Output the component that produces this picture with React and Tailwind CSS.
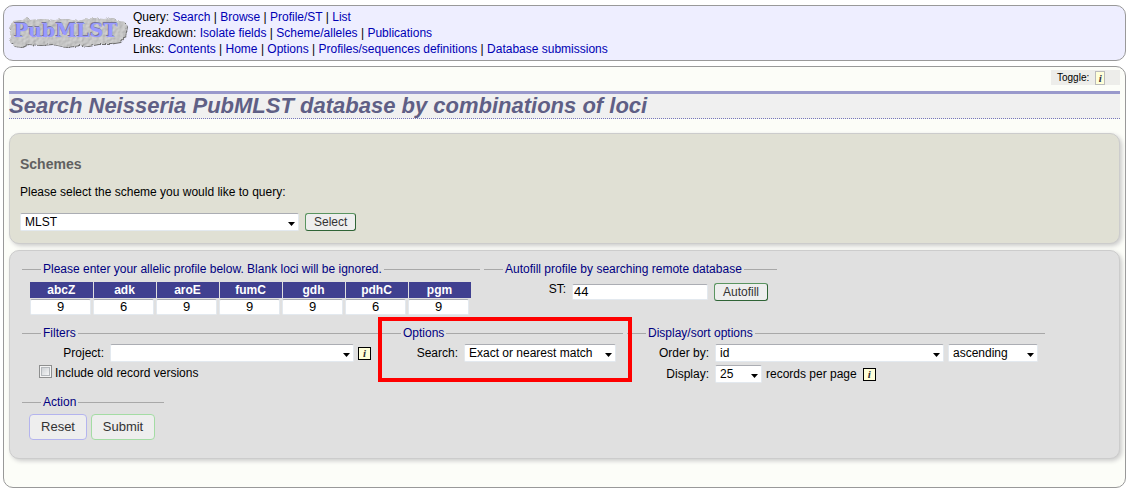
import React, { useState } from 'react';

const navRows = [
  { title: 'Query', links: ['Search', 'Browse', 'Profile/ST', 'List'] },
  { title: 'Breakdown', links: ['Isolate fields', 'Scheme/alleles', 'Publications'] },
  {
    title: 'Links',
    links: ['Contents', 'Home', 'Options', 'Profiles/sequences definitions', 'Database submissions'],
  },
];

const loci = ['abcZ', 'adk', 'aroE', 'fumC', 'gdh', 'pdhC', 'pgm'];

const Logo = () => (
  <svg width="120" height="34" viewBox="0 0 120 34" role="img" aria-label="PubMLST" className="shrink-0">
    <defs>
      <filter id="stone" x="-5%" y="-10%" width="110%" height="125%" colorInterpolationFilters="sRGB">
        <feTurbulence type="fractalNoise" baseFrequency="0.3" numOctaves="2" seed="4" result="noise" />
        <feDisplacementMap in="SourceGraphic" in2="noise" scale="3" xChannelSelector="R" yChannelSelector="G" result="rough" />
        <feDiffuseLighting in="noise" surfaceScale="0.5" lightingColor="#dadada" result="light">
          <feDistantLight azimuth="225" elevation="65" />
        </feDiffuseLighting>
        <feComposite in="light" in2="rough" operator="in" result="rock" />
        <feDropShadow in="rough" dx="1" dy="1" stdDeviation="0.4" floodColor="#707070" result="edge" />
        <feMerge>
          <feMergeNode in="edge" />
          <feMergeNode in="rock" />
        </feMerge>
      </filter>
    </defs>
    <path
      filter="url(#stone)"
      fill="#c4c4c4"
      d="M5 5 L15 4 L19 1 L22 4 L34 3 L46 4 L58 3 L70 5 L82 2 L96 3 L106 2 L109 5 L117 6 L119 10 L117 20 L112 26 L100 28 L90 28 L80 30 L72 29 L58 31 L44 28 L32 29 L20 28 L14 31 L6 30 L2 26 L3 20 L1 12 Z"
    />
    <text x="5" y="20" fontFamily="'DejaVu Serif', serif" fontWeight="bold" fontSize="19" fill="#77779c">
      PubMLST
    </text>
    <text x="6" y="21" fontFamily="'DejaVu Serif', serif" fontWeight="bold" fontSize="19" fill="#9999ff">
      PubMLST
    </text>
  </svg>
);

const Select = ({ options, className, ...props }) => (
  <span className={`relative inline-block h-[18px] ${className}`}>
    <select
      {...props}
      className="block h-full w-full appearance-none rounded-xs border border-[#e3e9ef] border-t-[#abadb3] bg-white pl-1 pr-4 text-[12px] leading-4 text-black"
    >
      {options.map((option) => (
        <option key={option}>{option}</option>
      ))}
    </select>
    <svg width="7" height="4" viewBox="0 0 7 4" className="pointer-events-none absolute right-1 bottom-[5px]">
      <path d="M0 0h7L3.5 4z" fill="#000" />
    </svg>
  </span>
);

const Fieldset = ({ legend, className, children }) => (
  <fieldset className={`relative border-t border-[#a8a8a8] ${className}`}>
    <legend className="ml-[19px] px-0.5 leading-4 text-[#000080]">{legend}</legend>
    {children}
  </fieldset>
);

const InfoButton = ({ className }) => (
  <button
    type="button"
    aria-label="Information"
    className={`border bg-[#ffffd8] text-center font-['Liberation_Serif',serif] text-[11px] font-bold italic ${className}`}
  >
    i
  </button>
);

const SmallButton = ({ children }) => (
  <button
    type="button"
    className="h-[18px] rounded-[3px] border border-[#5a9460] border-r-[#2f6436] border-b-[#2f6436] bg-[#eee] px-2 text-[12px] leading-4 text-[#333]"
  >
    {children}
  </button>
);

export default function App() {
  const [profile, setProfile] = useState({ abcZ: '9', adk: '6', aroE: '9', fumC: '9', gdh: '9', pdhC: '6', pgm: '9' });
  const [st, setSt] = useState('44');

  const handleChange = (e) => {
    const { name, value } = e.target;
    setProfile((prev) => ({ ...prev, [name]: value }));
  };

  return (
    <div className="bg-white px-[3px] pt-[5px] pb-3.5 font-['Liberation_Sans',Arial,sans-serif] text-[12px] leading-4 text-black">
      {/* Menu */}
      <header className="flex rounded-[10px] border border-[#999] bg-[#eeeeff] py-[3px] pl-1">
        <div className="mr-[5px] flex items-center">
          <Logo />
        </div>
        <nav>
          {navRows.map((row) => (
            <div key={row.title}>
              {row.title}:{' '}
              {row.links.map((link, i) => (
                <React.Fragment key={link}>
                  {i > 0 && ' | '}
                  <a href="#" className="text-[#0000b4]">
                    {link}
                  </a>
                </React.Fragment>
              ))}
            </div>
          ))}
        </nav>
      </header>

      <main className="mt-[5px] rounded-[10px] border border-[#999] bg-[#fcfdf8] px-[5px] pt-[3px] pb-7">
        <div className="flex justify-end">
          <div className="flex h-[15px] w-[69px] items-center gap-1.5 bg-[#ededea] pl-1.5 text-[10px]">
            Toggle:
            <InfoButton className="h-[14px] w-[10px] border-[#bbb] leading-3 text-[#334]" />
          </div>
        </div>
        <h1 className="mt-1.5 border-t-[3px] border-b border-t-[#9999cc] border-b-[#7777bb] bg-[#f0f0f0] text-[22px] leading-6 font-bold text-[#5f5f85] italic [border-bottom-style:dotted]">
          Search Neisseria PubMLST database by combinations of loci
        </h1>

        {/* Schemes */}
        <section className="mt-3.5 rounded-[10px] border border-[#ccc] bg-[#e0e0d4] px-2.5 pt-[22px] pb-3 shadow-[2px_2px_4px_#ccc]">
          <h2 className="text-[14px] leading-4 font-bold text-[#606060]">Schemes</h2>
          <p className="mt-3">
            <label htmlFor="scheme">Please select the scheme you would like to query:</label>
          </p>
          <div className="mt-[13px] flex gap-1.5">
            <Select id="scheme" options={['MLST']} className="w-[279px]" />
            <SmallButton>Select</SmallButton>
          </div>
        </section>

        {/* Query form */}
        <form
          onSubmit={(e) => e.preventDefault()}
          className="mt-1.5 rounded-[10px] border border-[#ccc] bg-[#e0e0e0] px-3 pt-2.5 pb-[18px] shadow-[2px_2px_4px_#ccc]"
        >
          <div className="flex gap-1">
            <Fieldset legend="Please enter your allelic profile below. Blank loci will be ignored." className="h-16 w-[458px]">
              <table className="mt-[5px] ml-2 border-collapse">
                <thead>
                  <tr>
                    {loci.map((locus) => (
                      <th
                        key={locus}
                        id={`head-${locus}`}
                        className="h-4 w-[63px] border-r border-[#e0e0e0] bg-[#404090] p-0 font-bold text-white"
                      >
                        {locus}
                      </th>
                    ))}
                  </tr>
                </thead>
                <tbody>
                  <tr>
                    {loci.map((locus) => (
                      <td key={locus} className="p-0 pt-px pr-0.5">
                        <input
                          type="text"
                          name={locus}
                          aria-labelledby={`head-${locus}`}
                          value={profile[locus]}
                          onChange={handleChange}
                          className="block h-4 w-[61px] rounded-xs border border-[#e3e9ef] border-t-[#abadb3] bg-white text-center text-[13px]"
                        />
                      </td>
                    ))}
                  </tr>
                </tbody>
              </table>
            </Fieldset>

            <Fieldset legend="Autofill profile by searching remote database" className="h-16 w-[293px]">
              <div className="mt-1 flex items-start">
                <label htmlFor="st" className="mr-1.5 w-[82px] text-right">
                  ST:
                </label>
                <div className="mt-0.5 flex items-center gap-1.5">
                  <input
                    id="st"
                    type="text"
                    value={st}
                    onChange={(e) => setSt(e.target.value)}
                    className="h-4 w-[136px] rounded-xs border border-[#e3e9ef] border-t-[#abadb3] bg-white px-px text-[13px]"
                  />
                  <SmallButton>Autofill</SmallButton>
                </div>
              </div>
            </Fieldset>
          </div>

          <div className="flex gap-1">
            <Fieldset legend="Filters" className="h-[69px] w-[356px]">
              <div className="mt-[3px] flex items-center">
                <label htmlFor="project" className="mr-1.5 w-[82px] text-right">
                  Project:
                </label>
                <Select id="project" options={['']} className="mr-1 w-[244px]" />
                <InfoButton className="size-[13px] border-black leading-[10px] text-[#333]" />
              </div>
              <div className="mt-[3px] flex items-start pl-[17px]">
                <input
                  id="old"
                  type="checkbox"
                  className="mr-[3px] size-[13px] appearance-none border border-[#8e8f8f] bg-linear-to-br from-[#c4c8cc] to-white shadow-[inset_0_0_0_1px_#f4f4f4,inset_0_0_0_2px_#b4b8bc] checked:bg-blue-500"
                />
                <label htmlFor="old">Include old record versions</label>
              </div>
            </Fieldset>

            <Fieldset legend="Options" className="z-10 h-[69px] w-[241px]">
              <div className="mt-[3px] flex items-center">
                <label htmlFor="match" className="mr-1.5 w-[76px] text-right">
                  Search:
                </label>
                <Select id="match" options={['Exact or nearest match']} className="w-[152px]" />
              </div>
              {/* Highlight */}
              <div className="pointer-events-none absolute -top-6 -left-1 h-[65px] w-[254px] border-4 border-[#f00]" />
            </Fieldset>

            <Fieldset legend="Display/sort options" className="h-[69px] w-[418px]">
              <div className="mt-[3px] flex items-center">
                <label htmlFor="order" className="mr-1.5 w-[82px] text-right">
                  Order by:
                </label>
                <Select id="order" options={['id']} className="mr-1 w-[229px]" />
                <Select aria-label="Sort direction" options={['ascending', 'descending']} className="w-[90px]" />
              </div>
              <div className="mt-[3px] flex items-center">
                <label htmlFor="display" className="mr-1.5 w-[82px] text-right">
                  Display:
                </label>
                <Select id="display" options={['25', '50', '100']} className="mr-1 w-[47px]" />
                records per page
                <InfoButton className="ml-1.5 size-[13px] border-black leading-[10px] text-[#333]" />
              </div>
            </Fieldset>
          </div>

          <Fieldset legend="Action" className="w-[142px]">
            <div className="mt-1 flex gap-1 pl-[7px]">
              <button
                type="reset"
                className="h-[26px] w-[58px] rounded-[4px] border border-[#b4b4ee] bg-[#eee] text-[13px] text-[#333]"
              >
                Reset
              </button>
              <button
                type="submit"
                className="h-[26px] w-16 rounded-[4px] border border-[#a4dca4] bg-[#eee] text-[13px] text-[#333]"
              >
                Submit
              </button>
            </div>
          </Fieldset>
        </form>
      </main>
    </div>
  );
}
